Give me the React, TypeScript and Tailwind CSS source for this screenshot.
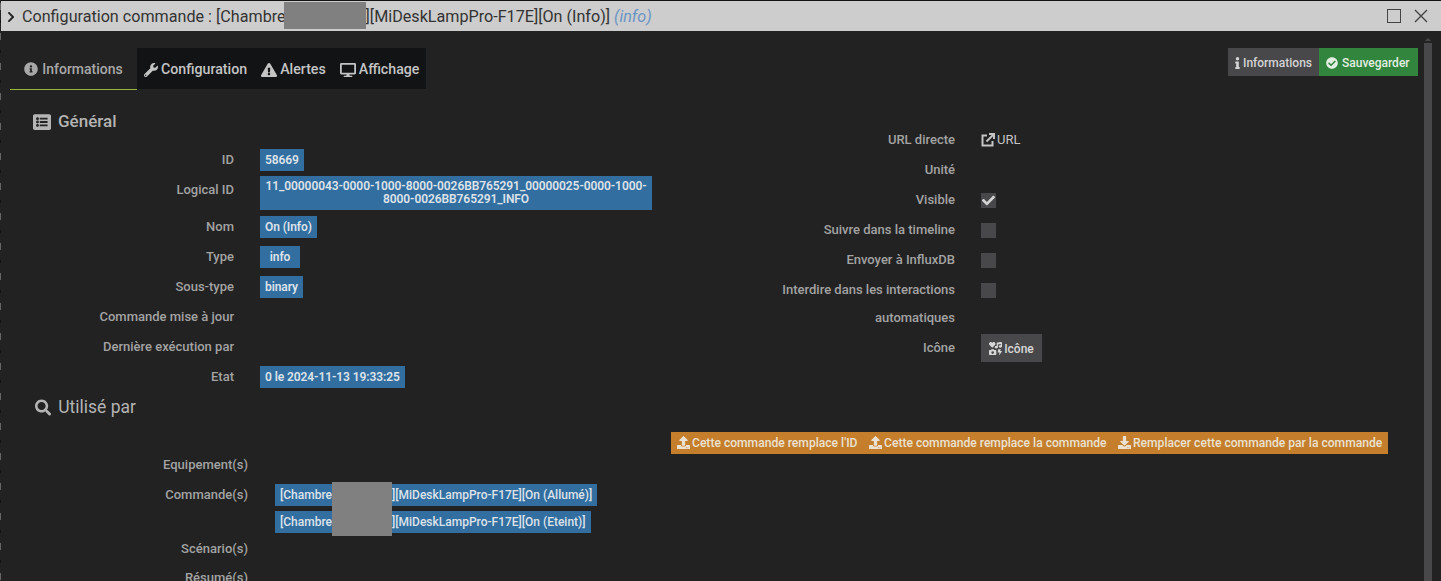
import React from 'react';
import {
  FaCheck,
  FaCheckCircle,
  FaChevronRight,
  FaDesktop,
  FaDownload,
  FaExclamationTriangle,
  FaIcons,
  FaInfo,
  FaInfoCircle,
  FaListAlt,
  FaSearch,
  FaUpload,
  FaWrench,
} from 'react-icons/fa';

const Label = ({ children, w }: { children: React.ReactNode; w: string }) => (
  <div className={`${w} shrink-0 text-right text-[13px] font-medium leading-[30px] text-[#a3a3a3]`}>{children}</div>
);

const Badge = ({ children, className = '' }: { children: React.ReactNode; className?: string }) => (
  <span className={`inline-block whitespace-nowrap bg-[#336ea0] px-[5px] text-center text-[12px] font-semibold leading-[22px] tracking-[-0.08px] text-[#dde3ea] ${className}`}>
    {children}
  </span>
);

const LeftRow = ({ label, children, h = 'h-[30px]' }: { label: string; children?: React.ReactNode; h?: string }) => (
  <div className={`flex ${h}`}>
    <Label w="w-[233px]">{label}</Label>
    <div className="ml-[26px] flex h-[30px] items-center">{children}</div>
  </div>
);

const RightRow = ({ label, children }: { label: React.ReactNode; children?: React.ReactNode }) => (
  <div className="flex h-[30px]">
    <Label w="w-[255px]">{label}</Label>
    <div className="ml-[26px] flex h-[30px] items-center">{children}</div>
  </div>
);

const Check = ({ checked = false }: { checked?: boolean }) => (
  <div className="mt-[1px] flex h-[15px] w-[15px] items-center justify-center bg-[#48484a] text-[#d4d4d4]">
    {checked && <FaCheck className="h-[13px] w-[13px]" />}
  </div>
);

const Tab = ({ icon, children }: { icon: React.ReactNode; children: React.ReactNode }) => (
  <div className="flex items-center gap-[3px] px-[7px] pt-[2px] text-[14.2px] font-medium text-[#c4c4c4]">
    {icon}
    {children}
  </div>
);

const OrangeBtn = ({ icon, children }: { icon: React.ReactNode; children: React.ReactNode }) => (
  <span className="flex items-center gap-[2px] text-[12.1px] font-medium text-[#ece2d2]">
    {icon}
    {children}
  </span>
);

export default function App() {
  return (
    <div className="flex h-[581px] w-[1441px] overflow-hidden bg-[#222222] font-['Roboto',sans-serif]">
      <div className="w-[1px] shrink-0 bg-[repeating-linear-gradient(180deg,#222_0px,#222_3px,#666_3px,#666_10px,#222_10px,#222_20px,#111_20px,#111_23px,#222_23px,#222_30px)]" />
      <div className="relative h-[581px] flex-1 overflow-hidden border-t border-[#111]">
        {/* title bar */}
        <div className="flex h-[30px] items-center bg-[#cdcdcd] pl-[4px] pr-[13px] text-[#222]">
          <FaChevronRight className="mt-[1px] h-[12px] w-[12px]" />
          <span className="ml-[5px] whitespace-nowrap pt-[3px] text-[16.15px] text-[#333]">
            Configuration commande : [Chambre
            <span className="inline-block w-[80px]" />
            ][MiDeskLampPro-F17E][On (Info)] <i className="text-[#6a94c4]">(info)</i>
          </span>
          <div className="ml-auto flex items-center gap-[13px]">
            <div className="h-[14px] w-[14px] border-[1.5px] border-[#444]" />
            <svg viewBox="0 0 14 14" className="h-[14px] w-[14px] stroke-[#444]" strokeWidth="1.4">
              <path d="M1 1L13 13M13 1L1 13" />
            </svg>
          </div>
        </div>
        <div className="absolute left-[283px] top-[1px] h-[27px] w-[82px] bg-[#808080]" />

        {/* tabs + actions */}
        <div className="mt-[17px] flex pl-[9px] pr-[22px]">
          <div className="flex h-[42px] w-[127px] items-center justify-center gap-[4px] border-b border-[#95b83a] pt-[1px] text-[14px] font-medium text-[#a8a8a8]">
            <FaInfoCircle className="h-[14px] w-[14px]" />
            Informations
          </div>
          <div className="flex h-[41px] bg-[#111314]">
            <Tab icon={<FaWrench className="h-[14px] w-[14px]" />}>Configuration</Tab>
            <Tab icon={<FaExclamationTriangle className="h-[16px] w-[16px]" />}>Alertes</Tab>
            <Tab icon={<FaDesktop className="h-[16px] w-[16px]" />}>Affichage</Tab>
          </div>
          <div className="ml-auto mr-[1px] flex h-[28px] text-[12px] font-medium">
            <div className="flex w-[91px] items-center gap-[1px] bg-[#48484a] pl-[5px] pt-[1px] text-[#d4d4d4]">
              <FaInfo className="h-[12px] w-[9px]" />
              Informations
            </div>
            <div className="flex w-[99px] items-center gap-[4px] bg-[#31853d] pl-[7px] pt-[1px] text-[#e2efe2]">
              <FaCheckCircle className="h-[12px] w-[12px]" />
              Sauvegarder
            </div>
          </div>
        </div>

        {/* two columns */}
        <div className="flex">
          <div className="w-[699px]">
            <div className="flex h-[55px] items-center gap-[7px] pl-[32px] pt-[8px] text-[17px] font-medium text-[#b4b4b4]">
              <FaListAlt className="h-[18px] w-[18px]" />
              Général
            </div>
            <LeftRow label="ID"><Badge>58669</Badge></LeftRow>
            <LeftRow label="Logical ID" h="h-[37px]">
              <Badge className="mt-[1px] w-[392px] self-start !px-0 py-[4px] !leading-[13px]">
                11_00000043-0000-1000-8000-0026BB765291_00000025-0000-1000-
                <br />
                8000-0026BB765291_INFO
              </Badge>
            </LeftRow>
            <LeftRow label="Nom"><Badge>On (Info)</Badge></LeftRow>
            <LeftRow label="Type"><Badge className="w-[40px]">info</Badge></LeftRow>
            <LeftRow label="Sous-type"><Badge>binary</Badge></LeftRow>
            <LeftRow label="Commande mise à jour" />
            <LeftRow label="Dernière exécution par" />
            <LeftRow label="Etat"><Badge>0 le 2024-11-13 19:33:25</Badge></LeftRow>
          </div>
          <div className="pt-[35px]">
            <RightRow label="URL directe">
              <span className="flex items-center gap-[2px] text-[13px] text-[#c4c4c4]">
                <svg viewBox="0 0 14 14" className="h-[14px] w-[14px]" fill="none" stroke="currentColor" strokeWidth="2">
                  <path d="M6 2.5H1.5v10h10V8" />
                  <path d="M5.5 8.5L12.5 1.5" />
                  <path d="M8 1h5v5" />
                </svg>
                URL
              </span>
            </RightRow>
            <RightRow label="Unité" />
            <RightRow label="Visible"><Check checked /></RightRow>
            <RightRow label="Suivre dans la timeline"><Check /></RightRow>
            <RightRow label="Envoyer à InfluxDB"><Check /></RightRow>
            <div className="flex h-[58px]">
              <div className="w-[255px] shrink-0 text-right text-[13px] font-medium leading-[26px] text-[#a3a3a3]">
                <div className="leading-[30px]">Interdire dans les interactions</div>
                automatiques
              </div>
              <div className="ml-[26px] flex h-[30px] items-center"><Check /></div>
            </div>
            <div className="flex h-[30px]">
              <Label w="w-[255px]">Icône</Label>
              <div className="ml-[26px] mt-[1px] flex h-[28px] w-[61px] items-center justify-center gap-[2px] bg-[#48484a] pt-[1px] text-[12px] font-medium text-[#d8d8d8]">
                <FaIcons className="h-[13px] w-[13px]" />
                Icône
              </div>
            </div>
          </div>
        </div>

        {/* used by */}
        <div className="flex h-[30px] w-[135px] items-center gap-[7px] overflow-hidden whitespace-nowrap pl-[34px] text-[17.5px] text-[#b4b4b4]">
          <FaSearch className="h-[17px] w-[17px]" />
          Utilisé par
        </div>
        <div className="ml-[670px] mt-[10px] flex h-[22px] w-[717px] items-center gap-[11.5px] bg-[#c47e2c] pl-[6px]">
          <OrangeBtn icon={<FaUpload className="h-[13px] w-[13px]" />}>Cette commande remplace l'ID</OrangeBtn>
          <OrangeBtn icon={<FaUpload className="h-[13px] w-[13px]" />}>Cette commande remplace la commande</OrangeBtn>
          <OrangeBtn icon={<FaDownload className="h-[13px] w-[13px]" />}>Remplacer cette commande par la commande</OrangeBtn>
        </div>
        <div className="mt-[-4px]">
          <Label w="w-[247px]">Equipement(s)</Label>
          <div className="flex">
            <Label w="w-[247px]">Commande(s)</Label>
            <div className="ml-[27px] mt-[4px] flex flex-col items-start gap-[5px]">
              <Badge className="!font-medium !tracking-normal">[Chambre<span className="inline-block w-[60px]" />][MiDeskLampPro-F17E][On (Allumé)]</Badge>
              <Badge className="!font-medium !tracking-normal">[Chambre<span className="inline-block w-[60px]" />][MiDeskLampPro-F17E][On (Eteint)]</Badge>
            </div>
          </div>
          <Label w="w-[247px] mt-[1px]">Scénario(s)</Label>
          <Label w="w-[247px] -mt-[1px]">Résumé(s)</Label>
        </div>
        <div className="absolute left-[331px] top-[481px] h-[54px] w-[60px] bg-[#808080]" />

        {/* scrollbar */}
        <div className="absolute left-[1423px] top-[42px] h-[540px] w-[8px] bg-[#48484a]" />
        <div className="absolute left-[1424px] top-[37px] h-0 w-0 border-x-[3px] border-b-[3px] border-x-transparent border-b-[#48484a]" />
      </div>
    </div>
  );
}
